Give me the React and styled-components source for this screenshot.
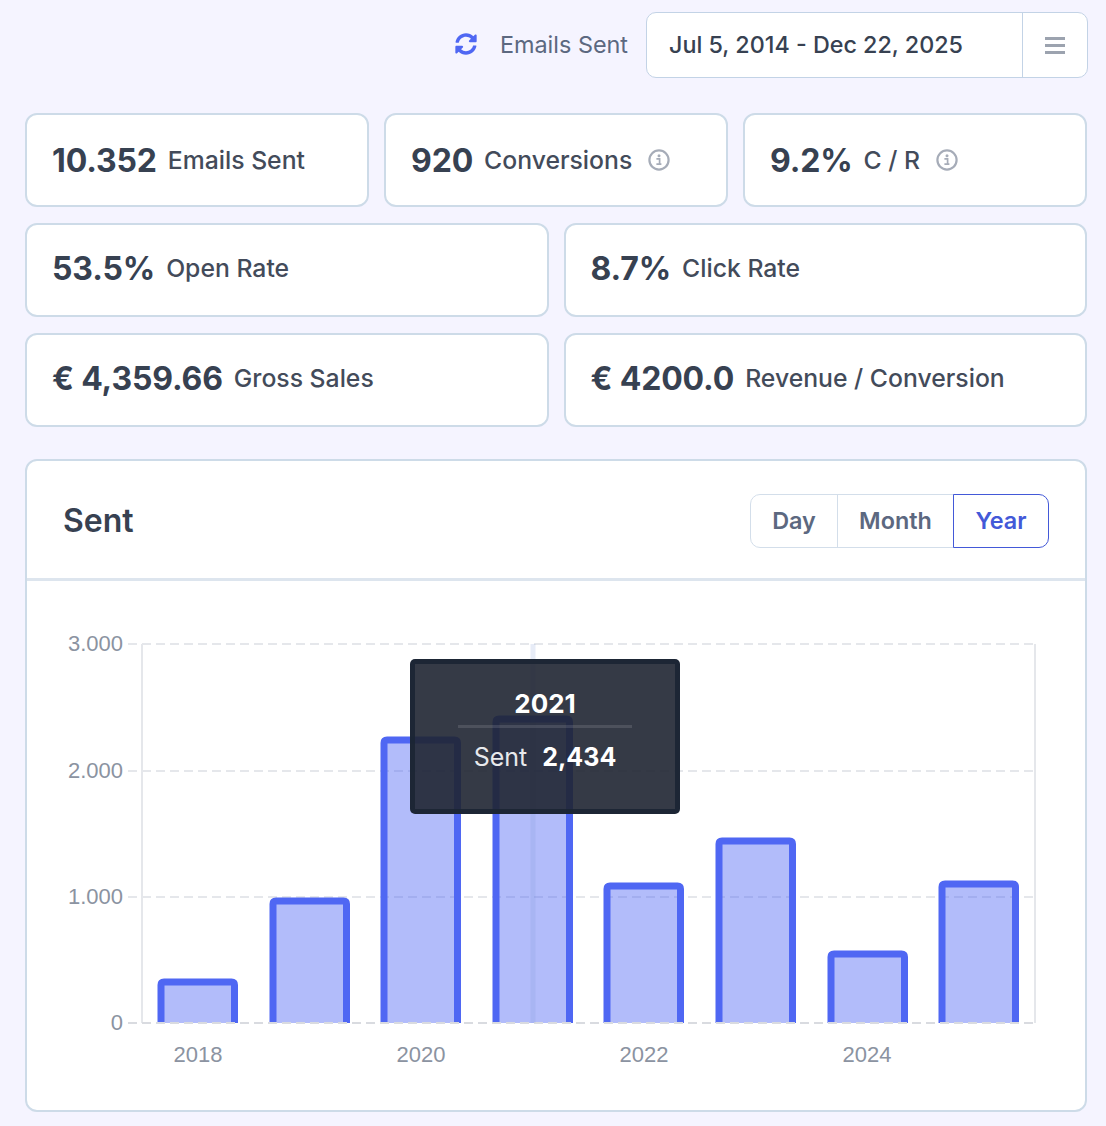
import React from "react";
import styled, { createGlobalStyle } from "styled-components";
import { FaSyncAlt } from "react-icons/fa";

const topStats = [
  { value: "10.352", label: "Emails Sent" },
  { value: "920", label: "Conversions", info: true },
  { value: "9.2%", label: "C / R", info: true },
];
const midStats = [
  { value: "53.5%", label: "Open Rate" },
  { value: "8.7%", label: "Click Rate" },
];
const bottomStats = [
  { value: "€ 4,359.66", label: "Gross Sales" },
  { value: "€ 4200.0", label: "Revenue / Conversion" },
];
const bars = [
  { year: "2018", top: 982, x: 161 },
  { year: "2019", top: 901, x: 273 },
  { year: "2020", top: 740, x: 384 },
  { year: "2021", top: 719, x: 496 },
  { year: "2022", top: 886, x: 607 },
  { year: "2023", top: 841, x: 719 },
  { year: "2024", top: 954, x: 831 },
  { year: "2025", top: 884, x: 942 },
];
const ORIGIN_X = 27;
const ORIGIN_Y = 581;

function InfoIcon() {
  return (
    <InfoSvg viewBox="0 0 22 22">
      <circle cx="11" cy="11" r="9.6" fill="none" stroke="currentColor" strokeWidth="2.2" />
      <circle cx="11" cy="6.7" r="1.5" fill="currentColor" />
      <path d="M8.4 9.8h3.2v5.4h1.7M8.4 15.2h5" fill="none" stroke="currentColor" strokeWidth="1.7" />
    </InfoSvg>
  );
}

function Stat({ value, label, info, raised }) {
  return (
    <StatCard $raised={raised}>
      <StatValue>{value}</StatValue>
      <StatLabel $raised={raised}>{label}</StatLabel>
      {info && <InfoIcon />}
    </StatCard>
  );
}

function SentChart() {
  const gy = (y) => y - ORIGIN_Y;
  const gx = (x) => x - ORIGIN_X;
  return (
    <ChartSvg viewBox="0 0 1058 529">
      {[644, 771, 897].map((y) => (
        <line key={y} x1={gx(128)} x2={gx(1035)} y1={gy(y)} y2={gy(y)} stroke="#e5e7eb" strokeWidth="2" strokeDasharray="9 5" />
      ))}
      <line x1={gx(142)} x2={gx(142)} y1={gy(644)} y2={gy(1023)} stroke="#e5e7eb" strokeWidth="2" />
      <line x1={gx(1035)} x2={gx(1035)} y1={gy(644)} y2={gy(1023)} stroke="#e5e7eb" strokeWidth="2" />
      {bars.map((b) => (
        <path
          key={b.year}
          d={`M${gx(b.x)} ${gy(1023)} V${gy(b.top) + 3} q0 -3 3 -3 H${gx(b.x) + 70.5} q3 0 3 3 V${gy(1023)}`}
          fill="rgba(79, 103, 243, 0.44)"
          stroke="#4f67f3"
          strokeWidth="7"
        />
      ))}
      <line x1={gx(128)} x2={gx(1035)} y1={gy(1023)} y2={gy(1023)} stroke="#d9dbe0" strokeWidth="2" strokeDasharray="9 5" />
      <line x1={gx(533)} x2={gx(533)} y1={gy(644)} y2={gy(1023)} stroke="rgba(120, 150, 210, 0.18)" strokeWidth="5" />
      {[["3.000", 643], ["2.000", 770], ["1.000", 896], ["0", 1022]].map(([t, y]) => (
        <AxisText key={t} x={gx(123)} y={gy(y) + 8} textAnchor="end">{t}</AxisText>
      ))}
      {bars.filter((b, i) => i % 2 === 0).map((b, i) => (
        <AxisText key={b.year} x={gx(198 + 223 * i)} y={gy(1062)} textAnchor="middle">{b.year}</AxisText>
      ))}
    </ChartSvg>
  );
}

export default function App() {
  return (
    <>
      <GlobalStyle />
      <Page>
        <TopBar>
          <SyncIcon><FaSyncAlt /></SyncIcon>
          <TopLabel>Emails Sent</TopLabel>
          <DateBox>
            <DateText>Jul 5, 2014 - Dec 22, 2025</DateText>
            <MenuButton>
              <svg width="20" height="18" viewBox="0 0 20 18">
                <rect x="0" y="1" width="20" height="3" fill="#9ca3af" />
                <rect x="0" y="8" width="20" height="3" fill="#9ca3af" />
                <rect x="0" y="15" width="20" height="3" fill="#9ca3af" />
              </svg>
            </MenuButton>
          </DateBox>
        </TopBar>
        <StatRow $cols={3}>
          {topStats.map((s) => <Stat key={s.label} {...s} />)}
        </StatRow>
        <StatRow $cols={2}>
          {midStats.map((s) => <Stat key={s.label} {...s} raised />)}
        </StatRow>
        <StatRow $cols={2}>
          {bottomStats.map((s) => <Stat key={s.label} {...s} raised />)}
        </StatRow>
        <ChartCard>
          <ChartHeader>
            <ChartTitle>Sent</ChartTitle>
            <Segments>
              <Segment $w={88}>Day</Segment>
              <Segment $w={117}>Month</Segment>
              <Segment $w={96} $active>Year</Segment>
            </Segments>
          </ChartHeader>
          <ChartBody>
            <SentChart />
            <Tooltip>
              <TooltipTitle>2021</TooltipTitle>
              <TooltipRow>
                <span>Sent</span>
                <strong>2,434</strong>
              </TooltipRow>
            </Tooltip>
          </ChartBody>
        </ChartCard>
      </Page>
    </>
  );
}

const GlobalStyle = createGlobalStyle`
  body {
    margin: 0;
    background: #f5f4ff;
    font-family: "Inter", "Liberation Sans", sans-serif;
  }
`;

const Page = styled.div`
  padding: 12px 19px 15px 25px;
  display: flex;
  flex-direction: column;
`;

const TopBar = styled.div`
  display: flex;
  align-items: center;
  justify-content: flex-end;
  margin: 0 -1px 35px 0;
`;

const SyncIcon = styled.span`
  display: flex;
  color: #4f67f3;
  font-size: 22px;
  margin: 0 23px 2px 0;
`;

const TopLabel = styled.span`
  font-size: 23.4px;
  color: #5c6880;
  margin: 0 18px 2px 0;
`;

const DateBox = styled.div`
  width: 442px;
  height: 66px;
  box-sizing: border-box;
  display: flex;
  align-items: center;
  background: #fff;
  border: 1px solid #c3d3e6;
  border-radius: 10px;
`;

const DateText = styled.span`
  flex: 1;
  padding: 0 0 2px 22px;
  font-size: 23.3px;
  font-weight: 500;
  color: #374151;
`;

const MenuButton = styled.div`
  width: 65px;
  height: 100%;
  box-sizing: border-box;
  display: flex;
  align-items: center;
  justify-content: center;
  border-left: 1px solid #c3d3e6;
`;

const StatRow = styled.div`
  display: grid;
  grid-template-columns: repeat(${(p) => p.$cols}, 1fr);
  column-gap: 15px;
  margin-bottom: 16px;
`;

const StatCard = styled.div`
  height: 94px;
  box-sizing: border-box;
  display: flex;
  align-items: center;
  padding: 0 25px ${(p) => (p.$raised ? "3px" : "0")};
  background: #fff;
  border: 2px solid #cddbe8;
  border-radius: 12px;
`;

const StatValue = styled.span`
  font-size: 32px;
  font-weight: 700;
  color: #374151;
  letter-spacing: -0.15px;
  margin-right: 11px;
`;

const StatLabel = styled.span`
  font-size: 24.75px;
  font-weight: 500;
  color: #434b5a;
  margin-bottom: ${(p) => (p.$raised ? "2px" : "0")};
`;

const InfoSvg = styled.svg`
  width: 22px;
  height: 22px;
  margin-left: 15.5px;
  color: #a6acb8;
`;

const ChartCard = styled.div`
  margin-top: 16px;
  background: #fff;
  border: 2px solid #cddbe8;
  border-radius: 12px;
  overflow: hidden;
`;

const ChartHeader = styled.div`
  height: 120px;
  box-sizing: border-box;
  display: flex;
  align-items: center;
  justify-content: space-between;
  padding: 2px 36px 0;
  border-bottom: 3px solid #dde5ee;
`;

const ChartTitle = styled.h2`
  margin: 0;
  font-size: 32px;
  font-weight: 600;
  color: #374151;
`;

const Segments = styled.div`
  display: flex;
  height: 54px;
`;

const Segment = styled.div`
  width: ${(p) => p.$w}px;
  box-sizing: border-box;
  display: flex;
  align-items: center;
  justify-content: center;
  font-size: 23.4px;
  font-weight: 600;
  color: ${(p) => (p.$active ? "#4359d8" : "#5c6880")};
  border: 1px solid ${(p) => (p.$active ? "#4359d8" : "#d3deea")};
  margin-left: -1px;
  &:first-child {
    border-radius: 10px 0 0 10px;
    margin-left: 0;
  }
  &:last-child {
    border-radius: 0 10px 10px 0;
  }
`;

const ChartBody = styled.div`
  position: relative;
  height: 529px;
`;

const ChartSvg = styled.svg`
  display: block;
  width: 1058px;
  height: 529px;
`;

const AxisText = styled.text`
  font-family: "Liberation Sans", Arial, sans-serif;
  font-size: 22px;
  fill: #8b93a1;
`;

const Tooltip = styled.div`
  position: absolute;
  left: 383px;
  top: 78px;
  width: 270px;
  height: 155px;
  box-sizing: border-box;
  display: flex;
  flex-direction: column;
  align-items: center;
  padding-top: 24px;
  background: rgba(31, 37, 50, 0.9);
  border: 5px solid rgba(28, 37, 52, 0.9);
  border-radius: 5px;
  color: #fff;
`;

const TooltipTitle = styled.div`
  width: 174px;
  text-align: center;
  font-size: 26px;
  font-weight: 700;
  padding-bottom: 6px;
  border-bottom: 3px solid rgba(255, 255, 255, 0.12);
`;

const TooltipRow = styled.div`
  margin-top: 14px;
  font-size: 25px;
  color: #e8e9ec;
  display: flex;
  gap: 15px;
  strong {
    color: #fff;
    font-weight: 700;
  }
`;
